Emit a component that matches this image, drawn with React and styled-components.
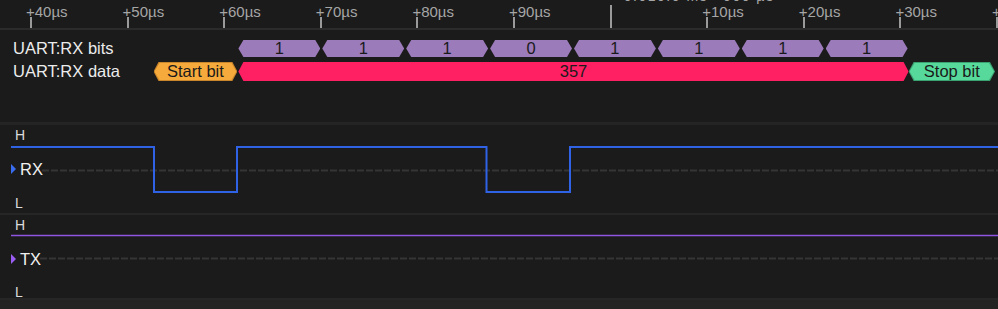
import React from "react";
import styled, { createGlobalStyle } from "styled-components";

const Global = createGlobalStyle`
  html, body { margin: 0; padding: 0; background: #1b1b1b; overflow: hidden; }
  body { font-family: "Liberation Sans", Arial, sans-serif; }
`;

const Page = styled.div`
  width: 998px;
  height: 309px;
  display: flex;
  flex-direction: column;
  background: #1b1b1b;
  overflow: hidden;
`;

const Ruler = styled.div`
  position: relative;
  height: 28px;
  flex: none;
  border-bottom: 2px solid #2b2b2b;
  overflow: hidden;
`;

const Tick = styled.div`
  position: absolute;
  bottom: 0;
  width: 2px;
  margin-left: -1px;
  height: ${(p) => (p.$major ? "23px" : "11px")};
  background: #9a9a9a;
`;

const TickLabel = styled.span`
  position: absolute;
  top: 3px;
  margin-left: -5px;
  font-size: 15px;
  line-height: 18px;
  color: #a6a6a6;
  white-space: nowrap;
`;

const Cursor = styled.span`
  position: absolute;
  top: -12px;
  font-size: 14px;
  line-height: 16px;
  color: #a6a6a6;
  letter-spacing: 1.5px;
  white-space: nowrap;
`;

const Decoders = styled.div`
  height: 95px;
  flex: none;
  padding-top: 10px;
  box-sizing: border-box;
  display: flex;
  flex-direction: column;
  gap: 5px;
  border-bottom: 3px solid #242424;
`;

const DecRow = styled.div`
  position: relative;
  height: ${(p) => p.$h}px;
  display: flex;
  align-items: center;
`;

const DecLabel = styled.span`
  padding-left: 13px;
  font-size: 16.5px;
  color: #ececec;
  white-space: nowrap;
`;

const shape = `polygon(5px 0, calc(100% - 5px) 0, 100% 50%, calc(100% - 5px) 100%, 5px 100%, 0 50%)`;

const Seg = styled.div`
  position: absolute;
  top: 0;
  bottom: 0;
  clip-path: ${shape};
  background: ${(p) => p.$edge};
`;

const SegFill = styled.div`
  position: absolute;
  inset: 1px 1px;
  clip-path: ${shape};
  background: ${(p) => p.$fill};
  display: flex;
  align-items: center;
  justify-content: center;
  font-size: 16.5px;
  color: #1a1a1a;
  white-space: nowrap;
`;

const Channel = styled.div`
  position: relative;
  height: ${(p) => p.$h}px;
  flex: none;
  display: flex;
  flex-direction: column;
  justify-content: space-between;
  box-sizing: border-box;
  border-bottom: 2px solid #262626;
`;

const Level = styled.span`
  position: relative;
  z-index: 1;
  padding-left: 15px;
  font-size: 14px;
  line-height: 20px;
  color: #dcdcdc;
  margin-bottom: ${(p) => p.$drop || 0}px;
`;

const Name = styled.div`
  position: relative;
  z-index: 1;
  display: flex;
  align-items: center;
  gap: 4px;
  padding-left: 11px;
  font-size: 16.5px;
  line-height: 20px;
  color: #f0f0f0;
`;

const Arrow = styled.span`
  width: 0;
  height: 0;
  border-top: 5px solid transparent;
  border-bottom: 5px solid transparent;
  border-left: 5px solid ${(p) => p.$c};
`;

const Trace = styled.svg`
  position: absolute;
  left: 0;
  top: 0;
  width: 998px;
  height: 100%;
`;

const Footer = styled.div`
  flex: 1;
  background: #232323;
`;

const X0 = 31;
const STEP = 96.6;
const ticks = ["+40µs", "+50µs", "+60µs", "+70µs", "+80µs", "+90µs", null, "+10µs", "+20µs", "+30µs", "+"];

const START = 153.5;
const BIT = 83.9;
const bits = ["1", "1", "1", "0", "1", "1", "1", "1"];

function Segment({ x0, x1, fill, edge, children }) {
  return (
    <Seg $edge={edge || fill} style={{ left: x0, width: x1 - x0 }}>
      <SegFill $fill={fill}>{children}</SegFill>
    </Seg>
  );
}

export default function App() {
  const b = (k) => START + k * BIT;
  return (
    <Page>
      <Global />
      <Ruler>
        <Cursor style={{ left: 612 }}>• 0:010.0 ms +000 µs</Cursor>
        {ticks.map((t, i) => {
          const x = X0 + i * STEP;
          return (
            <React.Fragment key={i}>
              <Tick $major={t === null} style={{ left: x }} />
              {t && <TickLabel style={{ left: x }}>{t}</TickLabel>}
            </React.Fragment>
          );
        })}
      </Ruler>

      <Decoders>
        <DecRow $h={17}>
          <DecLabel>UART:RX bits</DecLabel>
          {bits.map((v, i) => (
            <Segment key={i} x0={b(i + 1) + 1} x1={b(i + 2) - 1} fill="#9c7bbb">
              {v}
            </Segment>
          ))}
        </DecRow>
        <DecRow $h={19}>
          <DecLabel>UART:RX data</DecLabel>
          <Segment x0={b(0)} x1={b(1)} fill="#f7aa3c" edge="#c9862a">Start bit</Segment>
          <Segment x0={b(1) + 1} x1={b(9)} fill="#ff1f63">357</Segment>
          <Segment x0={b(9)} x1={995} fill="#57d99b" edge="#3aa271">Stop bit</Segment>
        </DecRow>
      </Decoders>

      <Channel $h={90}>
        <Trace viewBox="0 0 998 88" preserveAspectRatio="none">
          <line x1="42" y1="45.5" x2="998" y2="45.5" stroke="#353535" strokeWidth="2" strokeDasharray="7 2" />
          <polyline
            fill="none"
            stroke="#3062e6"
            strokeWidth="2"
            points="11,22 154,22 154,67 237,67 237,22 486.5,22 486.5,67 570,67 570,22 998,22"
          />
        </Trace>
        <Level>H</Level>
        <Name>
          <Arrow $c="#3a6cf0" />
          RX
        </Name>
        <Level>L</Level>
      </Channel>

      <Channel $h={85}>
        <Trace viewBox="0 0 998 83" preserveAspectRatio="none">
          <line x1="40" y1="43.5" x2="998" y2="43.5" stroke="#353535" strokeWidth="2" strokeDasharray="7 2" />
          <line x1="11" y1="20.5" x2="998" y2="20.5" stroke="#8f55e0" strokeWidth="1.5" />
        </Trace>
        <Level>H</Level>
        <Name>
          <Arrow $c="#9a5cf2" />
          TX
        </Name>
        <Level $drop={-4}>L</Level>
      </Channel>
      <Footer />
    </Page>
  );
}
